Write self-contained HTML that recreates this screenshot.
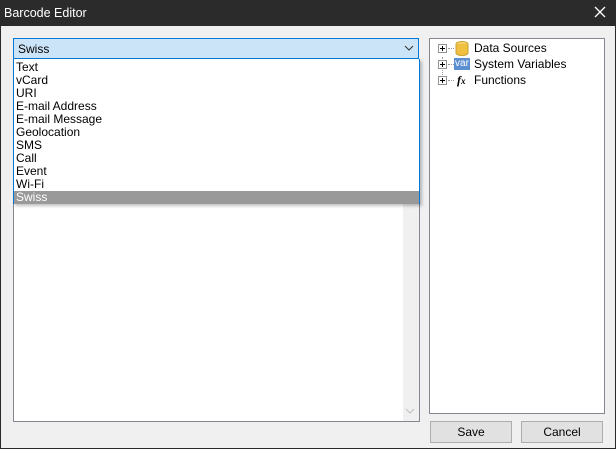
<!DOCTYPE html>
<html><head><style>
*{margin:0;padding:0;box-sizing:border-box}
body{width:616px;height:449px;background:#f0f0f0;font-family:"Liberation Sans",sans-serif;font-size:12px;color:#000;position:relative;overflow:hidden}
.frame{position:absolute;left:0;top:0;width:616px;height:449px;border:1px solid #2b2b2b;border-top:none}
.title{position:absolute;left:0;top:0;width:616px;height:26px;background:#2b2b2b;color:#fff;font-size:12.5px;line-height:26px;padding-left:4px}
.x{position:absolute;right:10px;top:6px}
.ed{position:absolute;left:13px;top:59px;width:407px;height:363px;background:#fff;border:1px solid #828790}
.sb{position:absolute;left:403px;top:59px;width:16px;height:362px;background:#f0f0f0}
.combo{position:absolute;left:13px;top:38px;width:406px;height:21px;background:#cce4f7;border:1px solid #0078d7;padding-left:4px;line-height:20px}
.list{position:absolute;left:13px;top:59px;width:407px;height:145px;background:#fff;border:1px solid #0078d7;border-top:none;box-shadow:2px 2px 3px rgba(0,0,0,.25);padding-top:2px}
.list div{height:13px;line-height:13px;padding-left:2px}
.list .sel{background:#999;color:#fff}
.tree{position:absolute;left:429px;top:38px;width:176px;height:376px;background:#fff;border:1px solid #828790}
.row{position:absolute;left:8px;height:16px;line-height:16px}
.pl{position:absolute;left:0;top:4px;width:9px;height:9px;border:1px solid #919191;background:#fff}
.pl:before{content:"";position:absolute;left:1px;top:3px;width:5px;height:1px;background:#000}
.pl:after{content:"";position:absolute;left:3px;top:1px;width:1px;height:5px;background:#000}
.dot{position:absolute;left:10px;top:8px;width:6px;border-top:1px dotted #999}
.lbl{position:absolute;left:36px;white-space:nowrap}
.btn{position:absolute;top:421px;width:82px;height:22px;background:#e1e1e1;border:1px solid #adadad;text-align:center;line-height:20px}
</style></head><body>
<div class="title">Barcode Editor</div>
<svg class="x" width="12" height="12" viewBox="0 0 12 12"><path d="M1 1L11 11M11 1L1 11" stroke="#fff" stroke-width="1.3"/></svg>
<div class="frame"></div>
<div class="ed"></div>
<div class="sb"></div>
<svg style="position:absolute;left:405px;top:407px" width="10" height="8"><path d="M1 2L5 6L9 2" stroke="#c0c0c0" fill="none"/></svg>
<div class="combo">Swiss<svg style="position:absolute;right:4px;top:6px" width="10" height="7"><path d="M1 1L5 5L9 1" stroke="#333" fill="none"/></svg></div>
<div class="list">
<div>Text</div><div>vCard</div><div>URI</div><div>E-mail Address</div><div>E-mail Message</div><div>Geolocation</div><div>SMS</div><div>Call</div><div>Event</div><div>Wi-Fi</div><div class="sel">Swiss</div>
</div>
<div class="tree">
<div style="position:absolute;left:12px;top:18px;height:28px;border-left:1px dotted #999"></div>
<div class="row" style="top:1px;width:160px"><div class="pl"></div><div class="dot"></div>
<svg style="position:absolute;left:17px;top:1px" width="14" height="15"><ellipse cx="7" cy="3" rx="6" ry="2.5" fill="#f6d36a" stroke="#c9a030"/><path d="M1 3V12A6 2.5 0 0 0 13 12V3" fill="#f0c040" stroke="#c9a030"/></svg>
<span class="lbl">Data Sources</span></div>
<div class="row" style="top:17px;width:160px"><div class="pl"></div><div class="dot"></div>
<div style="position:absolute;left:16px;top:2px;width:16px;height:12px;background:#5b8fd0;color:#fff;font-size:10px;line-height:11px;text-align:center">var</div>
<span class="lbl">System Variables</span></div>
<div class="row" style="top:33px;width:160px"><div class="pl"></div><div class="dot"></div>
<span style="position:absolute;left:19px;font-family:'Liberation Serif',serif;font-style:italic;font-weight:bold;font-size:12px">f<span style="font-size:9px">x</span></span>
<span class="lbl">Functions</span></div>
</div>
<div class="btn" style="left:430px">Save</div>
<div class="btn" style="left:521px">Cancel</div>
</body></html>
